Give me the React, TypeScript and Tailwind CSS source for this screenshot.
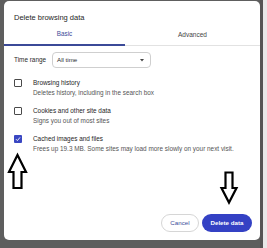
import React from "react";

const font = { fontFamily: '"Liberation Sans", Arial, sans-serif' };

function Box({ checked }: { checked?: boolean }) {
  if (checked) {
    return (
      <div className="w-[8px] h-[8px] rounded-[1px] bg-[#3a47c2] flex items-center justify-center shrink-0">
        <svg width="6" height="6" viewBox="0 0 6 6">
          <path d="M1 3.2 L2.4 4.6 L5 1.4" stroke="#fff" strokeWidth="0.9" fill="none" />
        </svg>
      </div>
    );
  }
  return <div className="w-[8px] h-[8px] rounded-[1px] border-[1.5px] border-[#4a4a4a] shrink-0" />;
}

function Item({ title, sub, checked }: { title: string; sub: string; checked?: boolean }) {
  return (
    <div className="flex items-start h-[28px]">
      <div className="w-[19px] pl-[10px] pt-[1px] box-content flex">
        <Box checked={checked} />
      </div>
      <div className="flex flex-col">
        <div className="text-[6.4px] leading-[10px] text-[#262626]">{title}</div>
        <div className="text-[6.4px] leading-[10px] text-[#555]">{sub}</div>
      </div>
    </div>
  );
}

export default function App() {
  return (
    <div className="relative w-[267px] h-[248px] bg-[#5e5e5e] flex overflow-hidden" style={font}>
      <div className="ml-[4px] mt-[1px] w-[256px] h-[239px] bg-white rounded-[5px] flex flex-col">
        <div className="pt-[12px] pl-[10px] text-[7.5px] leading-[10px] text-[#1e1e1e]">Delete browsing data</div>
        <div className="mt-[3px] flex border-b border-[#e2e2e2]">
          <div className="w-[121px] h-[20px] pb-[2px] -mb-px flex items-center justify-center border-b-2 border-[#3b4a98] text-[6.3px] text-[#3b4a98]">
            Basic
          </div>
          <div className="flex-1 h-[19px] pb-[1px] flex items-center justify-center text-[6.5px] text-[#444]">Advanced</div>
        </div>
        <div className="mt-[6px] flex items-center pl-[10px] h-[16px]">
          <div className="w-[38px] text-[6.4px] text-[#2a2a2a]">Time range</div>
          <div className="w-[99px] h-[16px] rounded-[4px] border border-[#cfcfcf] flex items-center justify-between pl-[4px] pr-[6px]">
            <span className="text-[6.2px] text-[#2a2a2a]">All time</span>
            <svg width="4" height="3" viewBox="0 0 4 3">
              <path d="M0 0 L4 0 L2 2.5 Z" fill="#444" />
            </svg>
          </div>
        </div>
        <div className="mt-[10px] flex flex-col">
          <Item title="Browsing history" sub="Deletes history, including in the search box" />
          <Item title="Cookies and other site data" sub="Signs you out of most sites" />
          <Item checked title="Cached images and files" sub="Frees up 19.3 MB. Some sites may load more slowly on your next visit." />
        </div>
        <div className="flex-1" />
        <div className="flex justify-end gap-[3px] pr-[8px] pb-[8px]">
          <div className="w-[38px] h-[18px] rounded-full border border-[#d6d6d6] flex items-center justify-center text-[6.2px] text-[#3b4a98]">
            Cancel
          </div>
          <div className="w-[50px] h-[18px] rounded-full bg-[#3441c4] flex items-center justify-center text-[6.2px] font-bold text-white">
            Delete data
          </div>
        </div>
      </div>
      <div className="w-[3px] h-[248px] bg-[#555]" />
      <div className="flex-1 h-[248px] bg-[#e8e8e8]" />
      <svg className="absolute left-0 top-0 pointer-events-none" width="267" height="248" viewBox="0 0 267 248">
        <path d="M17.5 155 L26 172 L21.5 172 L21.5 188 L13.5 188 L13.5 172 L9 172 Z" fill="#fff" stroke="#000" strokeWidth="2.2" strokeLinejoin="miter" />
        <path d="M225.5 172.5 L232.5 172.5 L232.5 188 L236.5 188 L229 202.5 L221.5 188 L225.5 188 Z" fill="#fff" stroke="#000" strokeWidth="2.2" strokeLinejoin="miter" />
      </svg>
    </div>
  );
}
